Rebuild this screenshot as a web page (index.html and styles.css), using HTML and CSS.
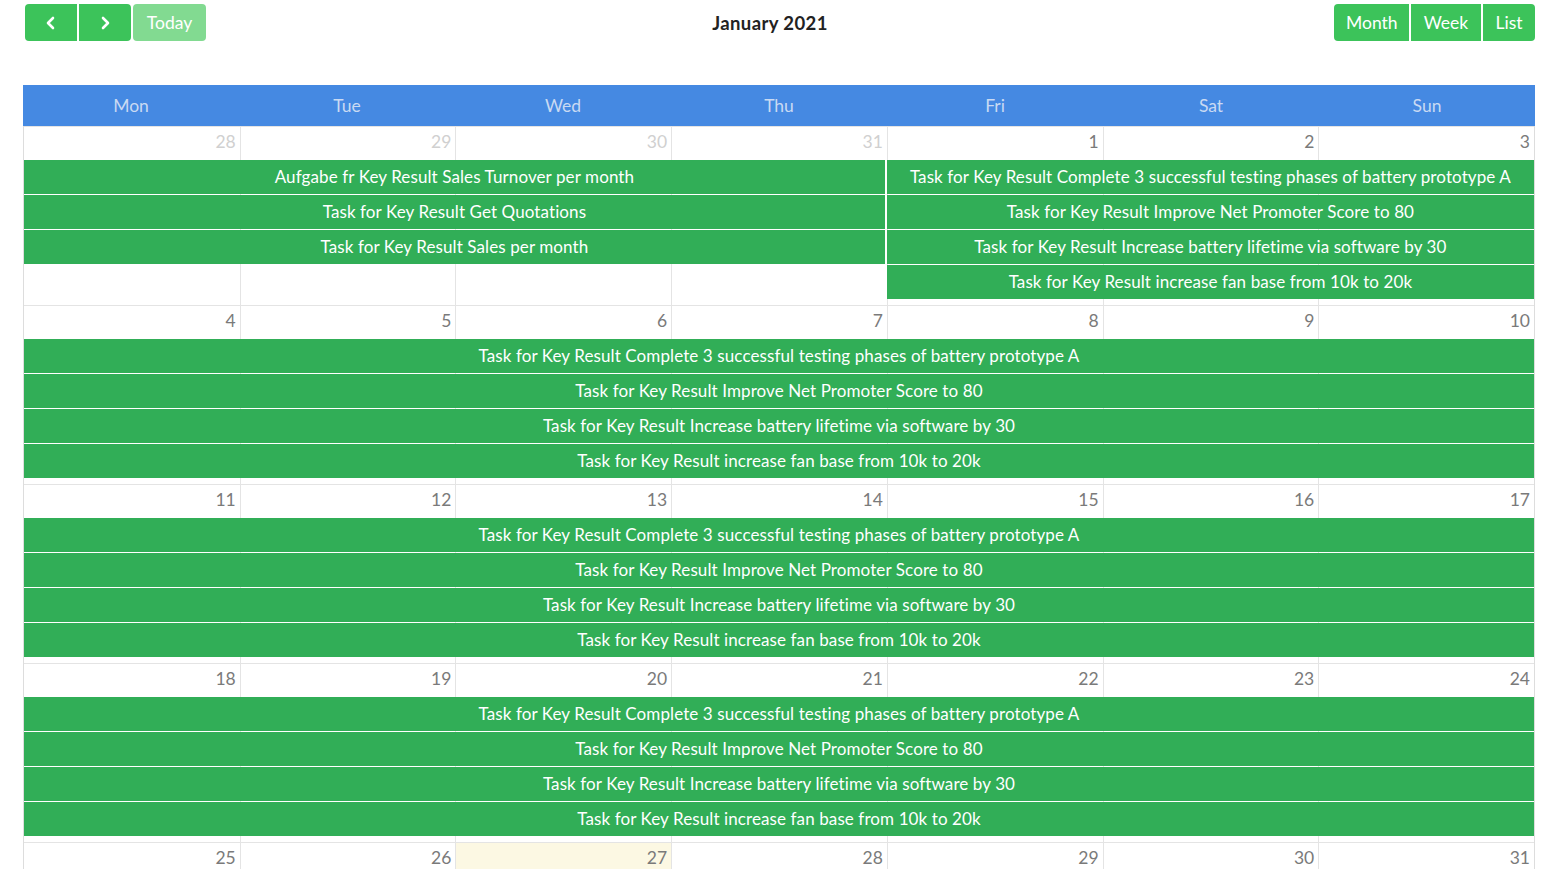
FILE: index.html
```html
<!DOCTYPE html>
<html lang="en">
<head>
    <meta charset="UTF-8">
    <meta name="viewport" content="width=device-width, initial-scale=1.0">
    <title>Calendar</title>
    <link rel="stylesheet" href="styles.css">
</head>
<body>
    <div class="toolbar">
        <div class="tb-left">
            <div class="btn-group">
                <button class="btn btn-icon" aria-label="prev">
                    <svg width="14" height="14" viewBox="0 0 14 14"><path d="M9 2 L4 7 L9 12" fill="none" stroke="#fff" stroke-width="2.6" stroke-linecap="round" stroke-linejoin="round"/></svg>
                </button>
                <button class="btn btn-icon" aria-label="next">
                    <svg width="14" height="14" viewBox="0 0 14 14"><path d="M5 2 L10 7 L5 12" fill="none" stroke="#fff" stroke-width="2.6" stroke-linecap="round" stroke-linejoin="round"/></svg>
                </button>
            </div>
            <button class="btn btn-today">Today</button>
        </div>
        <h2 class="title">January 2021</h2>
        <div class="btn-group">
            <button class="btn btn-view">Month</button>
            <button class="btn btn-view">Week</button>
            <button class="btn btn-view">List</button>
        </div>
    </div>

    <div class="calendar">
        <div class="head">
            <div>Mon</div><div>Tue</div><div>Wed</div><div>Thu</div><div>Fri</div><div>Sat</div><div>Sun</div>
        </div>

        <!-- week 1 -->
        <div class="week">
            <div class="day c1 other">28</div>
            <div class="day c2 other">29</div>
            <div class="day c3 other">30</div>
            <div class="day c4 other">31</div>
            <div class="day c5">1</div>
            <div class="day c6">2</div>
            <div class="day c7">3</div>
            <div class="event r2 left4">Aufgabe fr Key Result Sales Turnover per month</div>
            <div class="event r3 left4">Task for Key Result Get Quotations</div>
            <div class="event r4 left4">Task for Key Result Sales per month</div>
            <div class="event r2 right3">Task for Key Result Complete 3 successful testing phases of battery prototype A</div>
            <div class="event r3 right3">Task for Key Result Improve Net Promoter Score to 80</div>
            <div class="event r4 right3">Task for Key Result Increase battery lifetime via software by 30</div>
            <div class="event r5 right3">Task for Key Result increase fan base from 10k to 20k</div>
        </div>

        <!-- week 2 -->
        <div class="week">
            <div class="day c1">4</div>
            <div class="day c2">5</div>
            <div class="day c3">6</div>
            <div class="day c4">7</div>
            <div class="day c5">8</div>
            <div class="day c6">9</div>
            <div class="day c7">10</div>
            <div class="event r2 full">Task for Key Result Complete 3 successful testing phases of battery prototype A</div>
            <div class="event r3 full">Task for Key Result Improve Net Promoter Score to 80</div>
            <div class="event r4 full">Task for Key Result Increase battery lifetime via software by 30</div>
            <div class="event r5 full">Task for Key Result increase fan base from 10k to 20k</div>
        </div>

        <!-- week 3 -->
        <div class="week">
            <div class="day c1">11</div>
            <div class="day c2">12</div>
            <div class="day c3">13</div>
            <div class="day c4">14</div>
            <div class="day c5">15</div>
            <div class="day c6">16</div>
            <div class="day c7">17</div>
            <div class="event r2 full">Task for Key Result Complete 3 successful testing phases of battery prototype A</div>
            <div class="event r3 full">Task for Key Result Improve Net Promoter Score to 80</div>
            <div class="event r4 full">Task for Key Result Increase battery lifetime via software by 30</div>
            <div class="event r5 full">Task for Key Result increase fan base from 10k to 20k</div>
        </div>

        <!-- week 4 -->
        <div class="week">
            <div class="day c1">18</div>
            <div class="day c2">19</div>
            <div class="day c3">20</div>
            <div class="day c4">21</div>
            <div class="day c5">22</div>
            <div class="day c6">23</div>
            <div class="day c7">24</div>
            <div class="event r2 full">Task for Key Result Complete 3 successful testing phases of battery prototype A</div>
            <div class="event r3 full">Task for Key Result Improve Net Promoter Score to 80</div>
            <div class="event r4 full">Task for Key Result Increase battery lifetime via software by 30</div>
            <div class="event r5 full">Task for Key Result increase fan base from 10k to 20k</div>
        </div>

        <!-- week 5 -->
        <div class="week">
            <div class="day c1">25</div>
            <div class="day c2">26</div>
            <div class="day c3 today">27</div>
            <div class="day c4">28</div>
            <div class="day c5">29</div>
            <div class="day c6">30</div>
            <div class="day c7">31</div>
        </div>
    </div>
</body>
</html>
```

FILE: styles.css
```css
html, body{
    margin: 0;
    padding: 0;
}
body{
    padding: 4px 20px 0 23px;
    font-family: Lato, "Open Sans", sans-serif;
    color: #333;
    background: #fff;
}

/* 상단 툴바 */
.toolbar{
    display: flex;
    justify-content: space-between;
    align-items: center;
    height: 37px;
    margin-bottom: 44px;
}
.tb-left{
    display: flex;
    gap: 2px;
    padding-left: 2px;
}
.title{
    margin: 0;
    font-size: 18.5px;
    font-weight: 700;
    color: #222;
    letter-spacing: 0.4px;
}
.btn-group{
    display: flex;
    gap: 2px;
}
.btn{
    height: 37px;
    border: 0;
    margin: 0;
    padding: 0 12px;
    background: #3cc35a;
    color: #fff;
    font-family: inherit;
    font-size: 17.5px;
    cursor: pointer;
}
.btn-group .btn{
    border-radius: 0;
}
.btn-group .btn:first-child{
    border-radius: 4px 0 0 4px;
}
.btn-group .btn:last-child{
    border-radius: 0 4px 4px 0;
}
.btn-icon{
    width: 52px;
    display: flex;
    align-items: center;
    justify-content: center;
}
.btn-today{
    width: 73px;
    border-radius: 4px;
    background: #82da91;
}
.btn-view:nth-child(1){ width: 75px; }
.btn-view:nth-child(2){ width: 70px; }
.btn-view:nth-child(3){ width: 52px; }

/* 달력 */
.calendar{
    border-left: 1px solid #ddd;
    border-right: 1px solid #ddd;
}
.head{
    display: grid;
    grid-template-columns: repeat(7, 1fr);
    height: 41px;
    margin: 0 -1px;
    background: #4589e2;
}
.head div{
    display: flex;
    align-items: center;
    justify-content: center;
    color: #c9daf3;
    font-size: 17.5px;
}

.week{
    display: grid;
    grid-template-columns: repeat(7, 1fr);
    grid-template-rows: 33px repeat(4, 35px) 5px;
    border-top: 1px solid #e4e4e4;
}
.day{
    grid-row: 1 / -1;
    text-align: right;
    padding: 4px 4px 0 0;
    font-size: 17.5px;
    color: #7a7a7a;
}
.day + .day{
    border-left: 1px solid #e4e4e4;
}
.day.other{
    color: #d0d0d0;
}
.day.today{
    background: #fcf8e3;
}
.c1{ grid-column: 1; }
.c2{ grid-column: 2; }
.c3{ grid-column: 3; }
.c4{ grid-column: 4; }
.c5{ grid-column: 5; }
.c6{ grid-column: 6; }
.c7{ grid-column: 7; }

/* 일정 바 */
.event{
    display: flex;
    align-items: center;
    justify-content: center;
    height: 34px;
    padding-bottom: 1px;
    box-sizing: border-box;
    background: #31ae57;
    color: #fff;
    font-size: 17px;
    letter-spacing: 0.1px;
    white-space: nowrap;
    overflow: hidden;
}
.r2{ grid-row: 2; }
.r3{ grid-row: 3; }
.r4{ grid-row: 4; }
.r5{ grid-row: 5; }
.full{ grid-column: 1 / 8; }
.left4{ grid-column: 1 / 5; margin-right: 2px; }
.right3{ grid-column: 5 / 8; }
```
